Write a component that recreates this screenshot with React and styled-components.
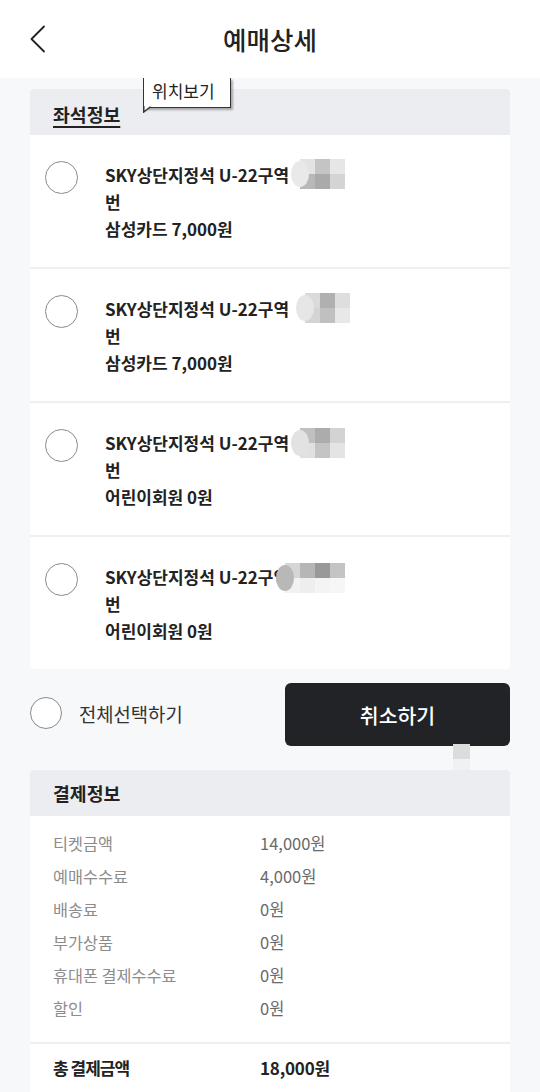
import React from "react";
import styled, { createGlobalStyle } from "styled-components";

const GlobalStyle = createGlobalStyle`
  html, body { margin: 0; padding: 0; }
  body {
    background: #f7f8fa;
    font-family: "Noto Sans CJK KR", "Noto Sans", sans-serif;
    color: #222;
    -webkit-font-smoothing: antialiased;
  }
  * { box-sizing: border-box; }
`;

const Page = styled.div`
  width: 540px;
  min-height: 1092px;
  background: #f7f8fa;
  overflow: hidden;
`;

const Header = styled.header`
  height: 78px;
  background: #fff;
  display: grid;
  grid-template-columns: 1fr auto 1fr;
  align-items: center;
  position: relative;
  z-index: 2;
`;

const BackButton = styled.button`
  justify-self: start;
  margin-left: 24px;
  width: 28px;
  height: 36px;
  border: 0;
  padding: 0;
  background: none;
  display: flex;
  align-items: center;
  justify-content: center;
`;

const Title = styled.h1`
  margin: 0;
  font-size: 25.5px;
  font-weight: 500;
  letter-spacing: 0;
  color: #222;
  line-height: 1;
  margin-top: -1px;
`;

const Main = styled.main`
  padding: 11px 30px 0;
  display: flex;
  flex-direction: column;
`;

const Card = styled.section`
  background: #fff;
  border-radius: 4px;
  position: relative;
  margin-top: ${(p) => p.$mt || 0}px;
`;

const CardHeader = styled.div`
  height: 46px;
  background: #ecedf1;
  border-radius: 4px 4px 0 0;
  display: flex;
  align-items: center;
  padding-left: 23px;
`;

const CardTitle = styled.h2`
  margin: 0;
  font-size: 18.3px;
  font-weight: 700;
  letter-spacing: 0;
  color: #222;
  text-decoration: ${(p) => (p.$underline ? "underline" : "none")};
  text-underline-offset: 4px;
  text-decoration-thickness: 1.5px;
  margin-top: ${(p) => (p.$underline ? "3px" : "0")};
`;

const Tooltip = styled.div`
  position: absolute;
  left: 113px;
  top: -11px;
  width: 88px;
  height: 30px;
  background: #fff;
  border-left: 1.5px solid #333;
  border-right: 1.5px solid #333;
  border-bottom: 1.5px solid #333;
  box-shadow: 2px 2px 2px rgba(0, 0, 0, 0.3);
  font-size: 17px;
  letter-spacing: 0;
  color: #222;
  padding-left: 8px;
  line-height: 25px;
  z-index: 1;
`;

const TooltipTail = styled.svg`
  position: absolute;
  left: -1.5px;
  bottom: -6px;
`;

const SeatList = styled.div`
  display: flex;
  flex-direction: column;
`;

const SeatItem = styled.div`
  display: flex;
  align-items: flex-start;
  padding: 26px 0 25px 15px;
  border-bottom: ${(p) => (p.$last ? "0" : "2px solid #eff0f2")};
`;

const Radio = styled.span`
  flex: none;
  width: ${(p) => p.$size || 33}px;
  height: ${(p) => p.$size || 33}px;
  border-radius: 50%;
  border: 1.5px solid #8a8a8a;
  background: #fff;
  margin-top: ${(p) => p.$mt || 0}px;
`;

const SeatText = styled.div`
  margin-left: 27px;
  font-size: 17px;
  font-weight: 700;
  line-height: 27px;
  letter-spacing: 0;
  color: #222;
  position: relative;
`;

const Line = styled.div``;

const Mosaic = styled.div`
  position: absolute;
  display: grid;
  grid-template-columns: repeat(${(p) => p.$cols}, 15px);
  grid-auto-rows: 15px;
`;

const Blob = styled.span`
  position: absolute;
  width: 18px;
  height: 26px;
  border-radius: 50%;
  left: -9px;
  top: 2px;
`;

const Cell = styled.span`
  display: block;
`;

const ActionRow = styled.div`
  margin-top: 14px;
  height: 63px;
  display: flex;
  align-items: center;
  justify-content: space-between;
`;

const SelectAll = styled.label`
  display: flex;
  align-items: center;
  gap: 17px;
  font-size: 18.8px;
  color: #333;
  letter-spacing: 0;
  margin-top: -3px;
`;

const CancelButton = styled.button`
  width: 225px;
  height: 63px;
  border: 0;
  border-radius: 6px;
  background: #222327;
  color: #fff;
  font-family: inherit;
  font-size: 20.5px;
  font-weight: 500;
  letter-spacing: 0;
  position: relative;
`;

const Artifact = styled.span`
  position: absolute;
  left: ${(p) => p.$x}px;
  top: ${(p) => p.$y}px;
  width: ${(p) => p.$w}px;
  height: ${(p) => p.$h}px;
  background: ${(p) => p.$c};
`;

const PayBody = styled.div`
  padding: 10px 0 18px 23px;
`;

const PayRow = styled.div`
  display: grid;
  grid-template-columns: 207px 1fr;
  height: ${(p) => (p.$total ? 46 : 33)}px;
  align-items: center;
  font-size: ${(p) => (p.$total ? 17 : 16.3)}px;
  font-weight: ${(p) => (p.$total ? 700 : 400)};
`;

const PayLabel = styled.span`
  color: ${(p) => (p.$total ? "#222" : "#8c8c8c")};
  letter-spacing: ${(p) => (p.$total ? "-1px" : "0")};
`;

const PayValue = styled.span`
  color: ${(p) => (p.$total ? "#222" : "#6a6a6a")};
  letter-spacing: ${(p) => (p.$total ? "-0.2px" : "0")};
  font-size: ${(p) => (p.$total ? 17 : 16.5)}px;
`;

const Divider = styled.div`
  height: 2px;
  background: #eff0f2;
`;

const TotalBody = styled.div`
  padding: 0 0 20px 23px;
`;

const seats = [
  {
    price: "삼성카드 7,000원",
    mosaic: { left: 195, top: -2, cols: 3, blob: "#e9e9e9", cells: ["#e3e3e3", "#c4c4c4", "#e6e6e6", "#b8b8b8", "#aaaaaa", "#d4d4d4"] },
  },
  {
    price: "삼성카드 7,000원",
    mosaic: { left: 200, top: -2, cols: 3, blob: "#e6e6e6", cells: ["#dadada", "#b0b0b0", "#dedede", "#d4d4d4", "#c0c0c0", "#e8e8e8"] },
  },
  {
    price: "어린이회원 0원",
    mosaic: { left: 195, top: -1, cols: 3, blob: "#e2e2e2", cells: ["#c0c0c0", "#acacac", "#d3d3d3", "#e0e0e0", "#c4c4c4", "#e4e4e4"] },
  },
  {
    price: "어린이회원 0원",
    mosaic: { left: 180, top: 0, cols: 4, blob: "#b8b8b8", cells: ["#d6d6d6", "#b6b6b6", "#999999", "#c4c4c4", "#f2f2f2", "#eeeeee", "#f4f4f4", "#f6f6f6"] },
  },
];

const payments = [
  ["티켓금액", "14,000원"],
  ["예매수수료", "4,000원"],
  ["배송료", "0원"],
  ["부가상품", "0원"],
  ["휴대폰 결제수수료", "0원"],
  ["할인", "0원"],
];

export default function App() {
  return (
    <Page>
      <GlobalStyle />
      <Header>
        <BackButton aria-label="뒤로">
          <svg width="18" height="28" viewBox="0 0 18 28" fill="none">
            <path d="M15 1.5 L2.5 14 L15 26.5" stroke="#222" strokeWidth="1.8" strokeLinecap="round" strokeLinejoin="round" />
          </svg>
        </BackButton>
        <Title>예매상세</Title>
        <span />
      </Header>
      <Main>
        <Card>
          <CardHeader>
            <CardTitle $underline>좌석정보</CardTitle>
          </CardHeader>
          <Tooltip>
            위치보기
            <TooltipTail width="9" height="7" viewBox="0 0 9 7">
              <path d="M0.75 0 L0.75 6 L7.5 0.75" fill="#fff" stroke="#333" strokeWidth="1.5" />
            </TooltipTail>
          </Tooltip>
          <SeatList>
            {seats.map((s, i) => (
              <SeatItem key={i} $last={i === seats.length - 1}>
                <Radio />
                <SeatText>
                  <Line>SKY상단지정석 U-22구역</Line>
                  <Line>번</Line>
                  <Line>{s.price}</Line>
                  <Mosaic $cols={s.mosaic.cols} style={{ left: s.mosaic.left, top: s.mosaic.top }}>
                    <Blob style={{ background: s.mosaic.blob }} />
                    {s.mosaic.cells.map((c, j) => (
                      <Cell key={j} style={{ background: c }} />
                    ))}
                  </Mosaic>
                </SeatText>
              </SeatItem>
            ))}
          </SeatList>
        </Card>

        <ActionRow>
          <SelectAll>
            <Radio $size={32} />
            전체선택하기
          </SelectAll>
          <CancelButton>
            취소하기
            <Artifact $x={168} $y={61} $w={17} $h={15} $c="#dcdcdc" />
            <Artifact $x={168} $y={76} $w={17} $h={13} $c="#f0f1f3" />
          </CancelButton>
        </ActionRow>

        <Card $mt={24}>
          <CardHeader>
            <CardTitle>결제정보</CardTitle>
          </CardHeader>
          <PayBody>
            {payments.map(([l, v]) => (
              <PayRow key={l}>
                <PayLabel>{l}</PayLabel>
                <PayValue>{v}</PayValue>
              </PayRow>
            ))}
          </PayBody>
          <Divider />
          <TotalBody>
            <PayRow $total>
              <PayLabel $total>총 결제금액</PayLabel>
              <PayValue $total>18,000원</PayValue>
            </PayRow>
          </TotalBody>
        </Card>
      </Main>
    </Page>
  );
}
